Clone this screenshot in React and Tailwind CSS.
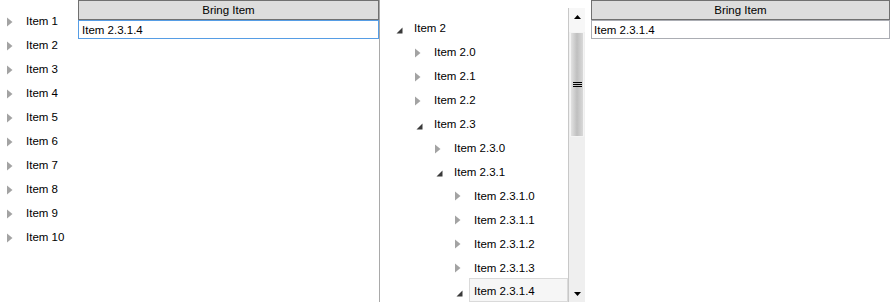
import React from "react";

const Collapsed = () => (
  <svg width="6" height="10" viewBox="0 0 6 10" className="block">
    <path d="M0 0.5 L5.5 5 L0 9.5 Z" fill="#a3a3a3" />
  </svg>
);

const Expanded = () => (
  <svg width="7" height="7" viewBox="0 0 7 7" className="block mt-[3px] ml-[1px]">
    <path d="M6.5 0.5 L6.5 6.5 L0.5 6.5 Z" fill="#3a3a3a" />
  </svg>
);

function Row({ pad, state, label, selected }) {
  return (
    <div className={`h-[24px] flex items-center ${pad}`}>
      <div className="w-[14px] h-full shrink-0 flex items-center pt-[4px]">
        {state === "open" ? <Expanded /> : <Collapsed />}
      </div>
      <div
        className={
          selected
            ? "flex-1 h-full flex items-center pl-[4px] pt-[3px] border border-[#dadada] bg-[#f6f6f6]"
            : "flex-1 h-full flex items-center pl-[5px] pt-[4px]"
        }
      >
        <span className="whitespace-nowrap">{label}</span>
      </div>
    </div>
  );
}

function ButtonBox({ focused }) {
  return (
    <div className="flex flex-col">
      <div className="h-[20px] flex items-center justify-center pt-[2px] bg-[#dddddd] border border-[#707070]">
        Bring Item
      </div>
      <div
        className={
          focused
            ? "h-[19px] flex items-center pl-[3px] pt-[2px] border border-[#569de5] bg-white"
            : "h-[19px] flex items-center pl-[2px] pt-[2px] border border-[#abadb3] bg-white"
        }
      >
        Item 2.3.1.4
      </div>
    </div>
  );
}

function ScrollBar() {
  return (
    <div className="mt-[8px] w-[17px] h-[294px] shrink-0 flex flex-col bg-[#efefef] border-l border-[#c8c8c8]">
      <div className="h-[24px] flex justify-center pt-[7px] bg-[#f7f7f7]">
        <svg width="7" height="4" viewBox="0 0 7 4" className="block">
          <path d="M3.5 0 L7 4 L0 4 Z" fill="#000" />
        </svg>
      </div>
      <div className="h-[105px] mx-[1px] border border-[#f4f4f4] bg-linear-to-r from-[#e2e2e2] via-[#bfbfbf] to-[#d9d9d9] flex flex-col items-center justify-center gap-[1px]">
        <div className="w-[9px] h-[1px] bg-black" />
        <div className="w-[9px] h-[1px] bg-black" />
        <div className="w-[9px] h-[1px] bg-black" />
      </div>
      <div className="flex-1" />
      <div className="h-[17px] flex items-center justify-center">
        <svg width="7" height="4" viewBox="0 0 7 4" className="block">
          <path d="M0 0 L7 0 L3.5 4 Z" fill="#000" />
        </svg>
      </div>
    </div>
  );
}

export default function App() {
  const leftItems = ["Item 1", "Item 2", "Item 3", "Item 4", "Item 5", "Item 6", "Item 7", "Item 8", "Item 9", "Item 10"];
  return (
    <div className="w-[890px] h-[302px] overflow-hidden bg-white flex text-[11.5px] text-black font-['Liberation_Sans',Arial,sans-serif]">
      <div className="w-[78px] shrink-0 pt-[8px] flex flex-col">
        {leftItems.map((t) => (
          <Row key={t} pad="pl-[7px]" state="closed" label={t} />
        ))}
      </div>
      <div className="w-[301px] shrink-0">
        <ButtonBox focused />
      </div>
      <div className="w-[212px] shrink-0 flex border-l border-[#a9a9a9]">
        <div className="w-[188px] shrink-0 pt-[15px] flex flex-col">
          <Row pad="pl-[15px]" state="open" label="Item 2" />
          <Row pad="pl-[35px]" state="closed" label="Item 2.0" />
          <Row pad="pl-[35px]" state="closed" label="Item 2.1" />
          <Row pad="pl-[35px]" state="closed" label="Item 2.2" />
          <Row pad="pl-[35px]" state="open" label="Item 2.3" />
          <Row pad="pl-[55px]" state="closed" label="Item 2.3.0" />
          <Row pad="pl-[55px]" state="open" label="Item 2.3.1" />
          <Row pad="pl-[75px]" state="closed" label="Item 2.3.1.0" />
          <Row pad="pl-[75px]" state="closed" label="Item 2.3.1.1" />
          <Row pad="pl-[75px]" state="closed" label="Item 2.3.1.2" />
          <Row pad="pl-[75px]" state="closed" label="Item 2.3.1.3" />
          <Row pad="pl-[75px]" state="open" label="Item 2.3.1.4" selected />
        </div>
        <ScrollBar />
      </div>
      <div className="w-[299px] shrink-0">
        <ButtonBox />
      </div>
    </div>
  );
}
